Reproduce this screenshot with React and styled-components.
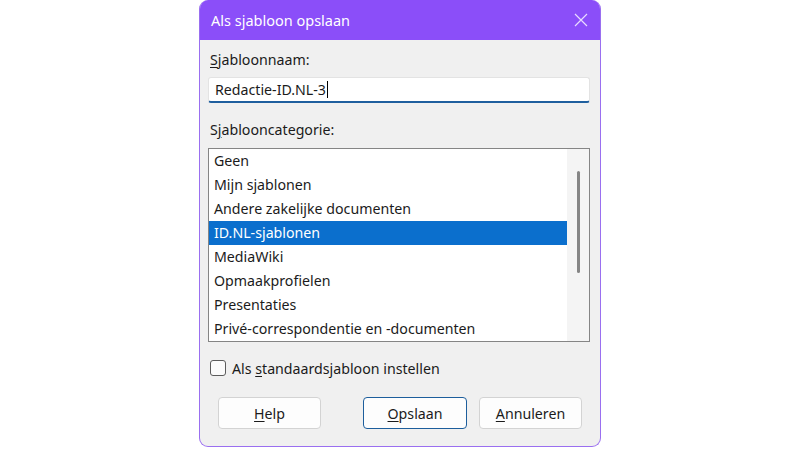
import React from 'react'
import styled, { createGlobalStyle } from 'styled-components'

const GlobalStyle = createGlobalStyle`
    html, body {
        margin: 0;
        padding: 0;
        background: #ffffff;
    }
    body {
        font-family: "Noto Sans", "Open Sans", "DejaVu Sans", sans-serif;
        color: #1b1b1b;
    }
`

const Page = styled.div`
    width: 800px;
    height: 450px;
    display: flex;
    justify-content: center;
    align-items: flex-start;
`

const Dialog = styled.div`
    width: 402px;
    height: 447px;
    box-sizing: border-box;
    border: 1px solid #9a6ff0;
    border-top: none;
    border-radius: 9px;
    background: #f0f0f0;
    display: flex;
    flex-direction: column;
    overflow: hidden;
`

const TitleBar = styled.div`
    height: 40px;
    flex-shrink: 0;
    background: #8b4ef9;
    display: flex;
    align-items: center;
    justify-content: space-between;
    padding: 0 12px 0 11px;
    color: #ffffff;
    font-size: 14.5px;
`

const Body = styled.div`
    display: flex;
    flex-direction: column;
    padding: 10px 10px 0 8px;
`

const Label = styled.div`
    height: 20px;
    line-height: 20px;
    font-size: 14.2px;
    padding-left: 2px;
    margin-bottom: ${p => p.$gap}px;
`

const Key = styled.span`
    text-decoration: underline;
    text-underline-offset: 2px;
`

const Input = styled.div`
    height: 26px;
    box-sizing: border-box;
    background: #ffffff;
    border: 1px solid #e3e3e3;
    border-bottom: 2px solid #1f5f9e;
    border-radius: 3px;
    display: flex;
    align-items: center;
    padding: 0 6px;
    font-size: 14.2px;
    margin-bottom: 17px;
`

const Caret = styled.span`
    display: inline-block;
    width: 1px;
    height: 17px;
    background: #000;
    margin-left: 1px;
`

const ListBox = styled.div`
    height: 194px;
    box-sizing: border-box;
    border: 1px solid #858585;
    background: #ffffff;
    display: flex;
`

const Items = styled.div`
    flex: 1;
    display: flex;
    flex-direction: column;
`

const Item = styled.div`
    height: 24px;
    line-height: 24px;
    padding-left: 5px;
    font-size: 14.2px;
    white-space: nowrap;
    background: ${p => (p.$selected ? '#0b6fcd' : 'transparent')};
    color: ${p => (p.$selected ? '#ffffff' : '#1b1b1b')};
`

const ScrollTrack = styled.div`
    width: 22px;
    background: #f4f4f4;
    display: flex;
    justify-content: center;
    padding-top: 22px;
`

const Thumb = styled.div`
    width: 3px;
    height: 102px;
    border-radius: 2px;
    background: #858585;
`

const CheckRow = styled.label`
    display: flex;
    align-items: center;
    gap: 6px;
    height: 20px;
    margin-top: 16px;
    padding-left: 2px;
    font-size: 14.2px;
`

const Box = styled.span`
    width: 16px;
    height: 16px;
    box-sizing: border-box;
    border: 1px solid #5c5c5c;
    border-radius: 3px;
    background: #fbfbfb;
`

const ButtonRow = styled.div`
    display: flex;
    justify-content: space-between;
    margin-top: 19px;
    padding: 0 8px 0 10px;
`

const ButtonGroup = styled.div`
    display: flex;
    gap: 12px;
`

const Button = styled.div`
    width: ${p => p.$w}px;
    height: 32px;
    box-sizing: border-box;
    border: 1px solid ${p => (p.$focused ? '#1d5e9c' : '#d3d3d3')};
    border-radius: 4px;
    background: #fdfdfd;
    display: flex;
    align-items: center;
    justify-content: center;
    font-size: 14.2px;
`

const categories = [
    'Geen',
    'Mijn sjablonen',
    'Andere zakelijke documenten',
    'ID.NL-sjablonen',
    'MediaWiki',
    'Opmaakprofielen',
    'Presentaties',
    'Privé-correspondentie en -documenten',
]

export default function App() {
    return (
        <Page>
            <GlobalStyle />
            <Dialog>
                <TitleBar>
                    <span>Als sjabloon opslaan</span>
                    <svg width="14" height="14" viewBox="0 0 14 14">
                        <path d="M1 1 L13 13 M13 1 L1 13" stroke="#e8dcff" strokeWidth="1.2" fill="none" />
                    </svg>
                </TitleBar>
                <Body>
                    <Label $gap={7}><Key>S</Key>jabloonnaam:</Label>
                    <Input>Redactie-ID.NL-3<Caret /></Input>
                    <Label $gap={8}>S<Key>j</Key>ablooncategorie:</Label>
                    <ListBox>
                        <Items>
                            {categories.map(c => (
                                <Item key={c} $selected={c === 'ID.NL-sjablonen'}>{c}</Item>
                            ))}
                        </Items>
                        <ScrollTrack>
                            <Thumb />
                        </ScrollTrack>
                    </ListBox>
                    <CheckRow>
                        <Box />
                        <span>Als <Key>s</Key>tandaardsjabloon instellen</span>
                    </CheckRow>
                    <ButtonRow>
                        <Button $w={103}><Key>H</Key>elp</Button>
                        <ButtonGroup>
                            <Button $w={104} $focused><Key>O</Key>pslaan</Button>
                            <Button $w={103}><Key>A</Key>nnuleren</Button>
                        </ButtonGroup>
                    </ButtonRow>
                </Body>
            </Dialog>
        </Page>
    )
}
